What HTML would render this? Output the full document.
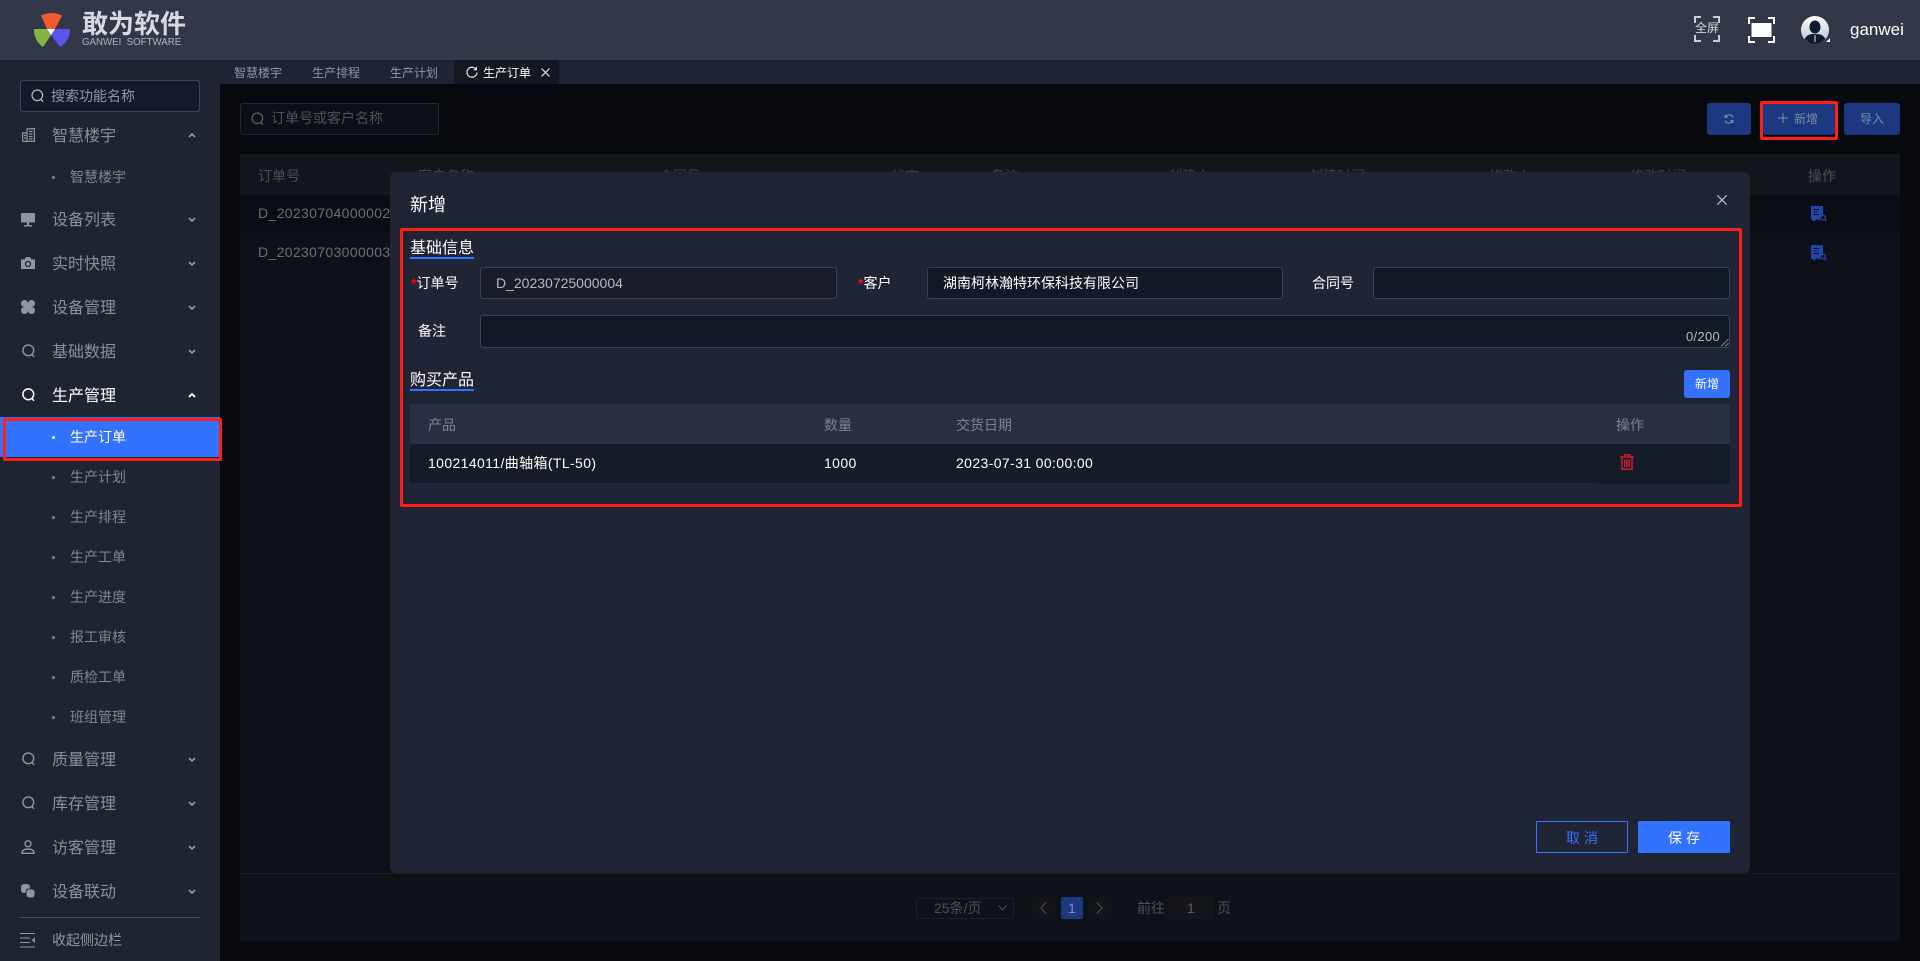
<!DOCTYPE html>
<html lang="zh"><head><meta charset="utf-8"><title>生产订单</title>
<style>
html,body{margin:0;padding:0;width:1920px;height:961px;overflow:hidden;background:#07090e}
body{position:relative;font-family:"Liberation Sans","Noto Sans CJK SC",sans-serif;font-size:14px;color:#fff}
.a,.t{position:absolute}
.t{line-height:20px;height:20px;white-space:nowrap}
.m{font-size:16px;color:#8a8f9c;left:52px}
.s{color:#7f8592;left:70px}
.dot{position:absolute;left:52px;width:3px;height:3px;border-radius:50%;background:#7f8592}
svg{position:absolute;display:block}
.ic{fill:none;stroke:#8f95a3;stroke-width:1.4}
.h{color:#3f424a}
.r{color:#6a6d74;letter-spacing:.35px}
.lb{color:#fff}
.inp{position:absolute;box-sizing:border-box;background:#131926;border:1px solid #3a4256;border-radius:3px}
.star{color:#ff0000;font-weight:700}
.th{color:#7d828e}
.v{letter-spacing:.38px}
</style></head><body>

<!-- header -->
<div class="a" style="left:0;top:0;width:1920px;height:60px;background:#323848"></div>
<svg style="left:30px;top:10px" width="44" height="40" viewBox="30 10 44 40">
<path d="M41 15.500Q51 10.500 62 15.500L55 29H47Z" fill="#f05a2c"/>
<path d="M34 29H47L51 35L43 47Q34 41 34 29Z" fill="#82b53f"/>
<path d="M70 29H55L51 35L60 47Q70 41 70 29Z" fill="#5a55ee"/>
<path d="M47 29H55L51 35Z" fill="#fff"/>
</svg>
<div class="t" style="left:82px;top:9px;height:30px;line-height:30px;font-size:26px;font-weight:700;color:#d6d9df">敢为软件</div>
<div class="t" style="left:82px;top:35px;height:16px;line-height:16px;font-size:9.700px;color:#aeb3bd">GANWEI&nbsp; SOFTWARE</div>

<svg style="left:1694px;top:16px" width="26" height="26" viewBox="0 0 26 26" fill="none" stroke="#c8cdd8" stroke-width="2"><path d="M1 7V1H7M19 1H25V7M25 19V25H19M7 25H1V19"/></svg>
<div class="t" style="left:1695px;top:18px;font-size:12px;color:#d4d7de">全屏</div>
<svg style="left:1748px;top:17px" width="27" height="26" viewBox="0 0 27 26" fill="none" stroke="#fff" stroke-width="2"><path d="M1 7V1H7M20 1H26V7M26 19V25H20M7 25H1V19"/><rect x="3.500" y="6" width="20" height="14" fill="#fff" stroke="none"/></svg>
<svg style="left:1801px;top:16px" width="29" height="29" viewBox="0 0 29 29"><defs><linearGradient id="g" x1="0" y1="0" x2="0" y2="1"><stop offset="0" stop-color="#fff"/><stop offset="1" stop-color="#b9c0d0"/></linearGradient></defs><circle cx="14" cy="14" r="14" fill="url(#g)"/><ellipse cx="14" cy="11" rx="5.500" ry="6.500" fill="#101a30"/><path d="M3.500 23Q6 18.500 11 18H17Q22 18.500 24.500 23Q20 28 14 28Q8 28 3.500 23Z" fill="#101a30"/><path d="M13.500 19H14.500V26H13.500Z" fill="#dfe3ea"/><path d="M25 26H29V22Z" fill="#fff"/></svg>
<div class="t" style="left:1850px;top:20px;font-size:17px;color:#fff">ganwei</div>

<!-- tab bar -->
<div class="a" style="left:220px;top:60px;width:1700px;height:24px;background:#1e2433"></div>
<div class="t" style="left:234px;top:63px;font-size:12px;color:#8f95a3">智慧楼宇</div>
<div class="t" style="left:312px;top:63px;font-size:12px;color:#8f95a3">生产排程</div>
<div class="t" style="left:390px;top:63px;font-size:12px;color:#8f95a3">生产计划</div>
<div class="a" style="left:454px;top:60px;width:105px;height:24px;background:#141823"></div>
<svg style="left:466px;top:66px" width="12" height="12" viewBox="0 0 12 12" fill="none" stroke="#e6e8ec" stroke-width="1.200"><path d="M10.200 3.500A5 5 0 1 0 11 6.500"/><path d="M10.500 0.800V3.800H7.500" stroke-width="1"/></svg>
<div class="t" style="left:483px;top:63px;font-size:12px;color:#fff">生产订单</div>
<svg style="left:541px;top:68px" width="9" height="9" viewBox="0 0 9 9" stroke="#e6e8ec" stroke-width="1.200"><path d="M.5 .5L8.500 8.500M8.500 .5L.5 8.500"/></svg>

<!-- sidebar -->
<div class="a" style="left:0;top:60px;width:220px;height:901px;background:#1f2433"></div>
<div class="a" style="left:20px;top:80px;width:180px;height:32px;box-sizing:border-box;background:#151a28;border:1px solid #3a4560;border-radius:3px"></div>
<svg style="left:31px;top:89px" width="13" height="14" viewBox="0 0 13 14" fill="none" stroke="#b6bac4" stroke-width="1.200"><circle cx="6.300" cy="6.300" r="5.300"/><path d="M10 10.500L12 12.800"/></svg>
<div class="t" style="left:51px;top:86px;color:#8f95a3">搜索功能名称</div>

<!-- menu icons -->
<svg style="left:22px;top:128px" width="13" height="14" viewBox="0 0 13 14" fill="none" stroke="#8f95a3" stroke-width="1.200"><path d="M.6 13.400V5H5M5 13.400V1L12.400 .6V13.400H.6"/><path d="M7 3.500H10.500M7 6H10.500M7 8.500H10.500M7 11H10.500M2 7.500H4M2 10H4"/></svg>
<svg style="left:21px;top:213px" width="14" height="14" viewBox="0 0 14 14" fill="#8f95a3"><rect width="14" height="9.500" rx="1"/><rect x="6" y="9.500" width="2" height="2.500"/><rect x="3" y="12" width="8" height="1.500"/></svg>
<svg style="left:21px;top:256px" width="14" height="14" viewBox="0 0 14 14"><path d="M0 3.500H3.500L5 1H9L10.500 3.500H14V13H0Z" fill="#8f95a3"/><circle cx="7" cy="8" r="2.500" fill="none" stroke="#1f2433" stroke-width="1.300"/></svg>
<svg style="left:21px;top:300px" width="14" height="14" viewBox="0 0 14 14" fill="#8f95a3"><circle cx="3.500" cy="3.500" r="3.500"/><circle cx="10.500" cy="3.500" r="3.500"/><circle cx="3.500" cy="10.500" r="3.500"/><circle cx="10.500" cy="10.500" r="3.500"/><rect x="3.500" y="3.500" width="7" height="7"/></svg>
<svg style="left:22px;top:344px" width="13" height="14" viewBox="0 0 13 14" class="ic"><circle cx="6.300" cy="6.300" r="5.400"/><path d="M10 10.500L12 12.800"/></svg>
<svg style="left:22px;top:388px" width="13" height="14" viewBox="0 0 13 14" fill="none" stroke="#fff" stroke-width="1.500"><circle cx="6.300" cy="6.300" r="5.400"/><path d="M10 10.500L12 12.800"/></svg>
<svg style="left:22px;top:752px" width="13" height="14" viewBox="0 0 13 14" class="ic"><circle cx="6.300" cy="6.300" r="5.400"/><path d="M10 10.500L12 12.800"/></svg>
<svg style="left:22px;top:796px" width="13" height="14" viewBox="0 0 13 14" class="ic"><circle cx="6.300" cy="6.300" r="5.400"/><path d="M10 10.500L12 12.800"/></svg>
<svg style="left:21px;top:840px" width="14" height="14" viewBox="0 0 14 14" class="ic"><circle cx="7" cy="3.800" r="3"/><path d="M1 13.300Q1 9 7 9Q13 9 13 13.300Z"/></svg>
<svg style="left:21px;top:884px" width="14" height="14" viewBox="0 0 14 14" fill="#8f95a3"><rect width="9" height="9" rx="3"/><rect x="5" y="5" width="9" height="9" rx="3" stroke="#1f2433" stroke-width="1"/></svg>
<svg style="left:20px;top:933px" width="15" height="15" viewBox="0 0 15 15" stroke="#8f95a3" fill="none"><path d="M0 .5H15M0 5H10M0 9.500H10M0 14H15"/><path d="M15 4.500L11.500 7.200L15 10Z" fill="#8f95a3" stroke="none"/></svg>

<!-- menu text -->
<div class="t m" style="top:127px">智慧楼宇</div>
<div class="t m" style="top:211px">设备列表</div>
<div class="t m" style="top:255px">实时快照</div>
<div class="t m" style="top:299px">设备管理</div>
<div class="t m" style="top:343px">基础数据</div>
<div class="t m" style="top:387px;color:#fff">生产管理</div>
<div class="t m" style="top:751px">质量管理</div>
<div class="t m" style="top:795px">库存管理</div>
<div class="t m" style="top:839px">访客管理</div>
<div class="t m" style="top:883px">设备联动</div>
<!-- chevrons -->
<svg style="left:0;top:0" width="220" height="961" fill="none" stroke="#a2a7b2" stroke-width="1.500">
<path d="M189 137L192 134L195 137"/>
<path d="M189 218L192 221L195 218M189 262L192 265L195 262M189 306L192 309L195 306M189 350L192 353L195 350M189 758L192 761L195 758M189 802L192 805L195 802M189 846L192 849L195 846M189 890L192 893L195 890"/>
<path d="M189 397L192 394L195 397" stroke="#fff" stroke-width="1.800"/>
</svg>

<div class="a" style="left:0;top:417px;width:220px;height:40px;background:#3371ff"></div>
<i class="dot" style="top:176px"></i><div class="t s" style="top:167px">智慧楼宇</div>
<i class="dot" style="top:436px;background:#fff"></i><div class="t s" style="top:427px;color:#fff">生产订单</div>
<i class="dot" style="top:476px"></i><div class="t s" style="top:467px">生产计划</div>
<i class="dot" style="top:516px"></i><div class="t s" style="top:507px">生产排程</div>
<i class="dot" style="top:556px"></i><div class="t s" style="top:547px">生产工单</div>
<i class="dot" style="top:596px"></i><div class="t s" style="top:587px">生产进度</div>
<i class="dot" style="top:636px"></i><div class="t s" style="top:627px">报工审核</div>
<i class="dot" style="top:676px"></i><div class="t s" style="top:667px">质检工单</div>
<i class="dot" style="top:716px"></i><div class="t s" style="top:707px">班组管理</div>
<div class="a" style="left:20px;top:917px;width:180px;height:1px;background:#4a5060"></div>
<div class="t" style="left:52px;top:930px;color:#8f95a3">收起侧边栏</div>
<div class="a" style="left:3px;top:418px;width:219px;height:43px;box-sizing:border-box;border:3px solid #ff1f14;border-radius:2px"></div>

<!-- content (dimmed) -->
<div class="a" style="left:240px;top:103px;width:199px;height:32px;box-sizing:border-box;border:1px solid #232734;border-radius:3px;background:#0c0f16"></div>
<svg style="left:251px;top:112px" width="13" height="14" viewBox="0 0 13 14" fill="none" stroke="#5c6068" stroke-width="1.200"><circle cx="6.300" cy="6.300" r="5.300"/><path d="M10 10.500L12 12.800"/></svg>
<div class="t" style="left:271px;top:108px;color:#4e5158">订单号或客户名称</div>

<div class="a" style="left:1707px;top:103px;width:44px;height:32px;border-radius:3px;background:#1b3880"></div>
<svg style="left:1724px;top:114px" width="10" height="10" viewBox="0 0 10 10" fill="none" stroke="#7f8ba6" stroke-width="1.200"><path d="M9 3.500A4.200 4.200 0 0 0 1.500 3M1 6.500A4.200 4.200 0 0 0 8.500 7"/><path d="M1.200 1V3.400H3.600M8.800 9V6.600H6.400"/></svg>
<div class="a" style="left:1763px;top:103px;width:72px;height:32px;border-radius:3px;background:#1b3880"></div>
<svg style="left:1778px;top:113px" width="10" height="10" viewBox="0 0 10 10" stroke="#7f8ba6" stroke-width="1"><path d="M5 0V10M0 5H10"/></svg>
<div class="t" style="left:1794px;top:109px;font-size:12px;color:#7f8ba6">新增</div>
<div class="a" style="left:1844px;top:103px;width:56px;height:32px;border-radius:3px;background:#1b3880"></div>
<div class="t" style="left:1860px;top:109px;font-size:12px;color:#7f8ba6">导入</div>
<div class="a" style="left:1760px;top:101px;width:78px;height:39px;box-sizing:border-box;border:3px solid #ff1f14;border-radius:2px"></div>

<div class="a" style="left:240px;top:154px;width:1660px;height:719px;background:#0e1119"></div>
<div class="a" style="left:240px;top:154px;width:1660px;height:41px;background:#13161d"></div>
<div class="a" style="left:240px;top:195px;width:1660px;height:38px;background:#0a0d13"></div>
<div class="a" style="left:240px;top:873px;width:1660px;height:68px;background:#10121a;border-top:1px solid #191c25;box-sizing:border-box"></div>

<div class="t h" style="left:258px;top:166px;color:#4b4e55">订单号</div>
<div class="t h" style="left:418px;top:166px">客户名称</div>
<div class="t h" style="left:659px;top:166px">合同号</div>
<div class="t h" style="left:891px;top:166px">状态</div>
<div class="t h" style="left:991px;top:166px">备注</div>
<div class="t h" style="left:1168px;top:166px">创建人</div>
<div class="t h" style="left:1309px;top:166px">创建时间</div>
<div class="t h" style="left:1489px;top:166px">修改人</div>
<div class="t h" style="left:1630px;top:166px">修改时间</div>
<div class="t h" style="left:1808px;top:166px;color:#4b4e55">操作</div>
<div class="t r" style="left:258px;top:203px">D_20230704000002</div>
<div class="t r" style="left:258px;top:242px">D_20230703000003</div>

<svg style="left:1811px;top:206px" width="16" height="16" viewBox="0 0 16 16"><path d="M0 0H12V10A4 4 0 0 0 9 15L6 13L3 15.500L0 13Z" fill="#1f47a8"/><path d="M2.500 3.500H8M2.500 6H6M2.500 8.500H8" stroke="#0a0d13" stroke-width="1"/><circle cx="12" cy="11.500" r="2.300" fill="none" stroke="#1f47a8" stroke-width="1.300"/><path d="M13.700 13.300L15.500 15.200" stroke="#1f47a8" stroke-width="1.300"/></svg>
<svg style="left:1811px;top:245px" width="16" height="16" viewBox="0 0 16 16"><path d="M0 0H12V10A4 4 0 0 0 9 15L6 13L3 15.500L0 13Z" fill="#1f47a8"/><path d="M2.500 3.500H8M2.500 6H6M2.500 8.500H8" stroke="#0e1119" stroke-width="1"/><circle cx="12" cy="11.500" r="2.300" fill="none" stroke="#1f47a8" stroke-width="1.300"/><path d="M13.700 13.300L15.500 15.200" stroke="#1f47a8" stroke-width="1.300"/></svg>

<!-- pagination -->
<div class="a" style="left:916px;top:898px;width:98px;height:21px;box-sizing:border-box;border:1px solid #1e2027;border-radius:2px"></div>
<div class="t" style="left:934px;top:898px;color:#4d4f56">25条/页</div>
<svg style="left:998px;top:905px" width="9" height="6" viewBox="0 0 9 6" fill="none" stroke="#4d4f56"><path d="M.5 .5L4.500 5L8.500 .5"/></svg>
<div class="a" style="left:1033px;top:897px;width:22px;height:22px;background:#14161c;border-radius:2px"></div>
<svg style="left:1040px;top:902px" width="7" height="12" viewBox="0 0 7 12" fill="none" stroke="#4d4f56"><path d="M6 .5L1 6L6 11.500"/></svg>
<div class="a" style="left:1061px;top:897px;width:22px;height:22px;background:#1b3880;border-radius:2px"></div>
<div class="t" style="left:1068px;top:898px;color:#8592ad">1</div>
<div class="a" style="left:1089px;top:897px;width:22px;height:22px;background:#14161c;border-radius:2px"></div>
<svg style="left:1096px;top:902px" width="7" height="12" viewBox="0 0 7 12" fill="none" stroke="#4d4f56"><path d="M1 .5L6 6L1 11.500"/></svg>
<div class="t" style="left:1137px;top:898px;color:#4d4f56">前往</div>
<div class="a" style="left:1168px;top:897px;width:46px;height:22px;background:#14161c;border-radius:2px"></div>
<div class="t" style="left:1187px;top:898px;color:#5c5e65">1</div>
<div class="t" style="left:1217px;top:898px;color:#4d4f56">页</div>

<!-- modal -->
<div class="a" style="left:390px;top:172px;width:1360px;height:701px;background:#1f2534;border-radius:6px"></div>
<div class="t" style="left:410px;top:195px;font-size:18px;color:#fff">新增</div>
<svg style="left:1717px;top:195px" width="10" height="10" viewBox="0 0 10 10" stroke="#cfd3da" stroke-width="1.100"><path d="M.3 .3L9.700 9.700M9.700 .3L.3 9.700"/></svg>

<div class="t" style="left:410px;top:239px;font-size:16px">基础信息</div>
<div class="a" style="left:410px;top:257px;width:64px;height:2px;background:#3371ff"></div>

<div class="t" style="left:411px;top:273px"><span class="star">*</span>订单号</div>
<div class="inp" style="left:480px;top:267px;width:357px;height:32px;background:#191d2a"></div>
<div class="t" style="left:496px;top:273px;color:#b5b9c2">D_20230725000004</div>
<div class="t" style="left:858px;top:273px"><span class="star">*</span>客户</div>
<div class="inp" style="left:927px;top:267px;width:356px;height:32px"></div>
<div class="t" style="left:943px;top:273px">湖南柯林瀚特环保科技有限公司</div>
<div class="t" style="left:1312px;top:273px">合同号</div>
<div class="inp" style="left:1373px;top:267px;width:357px;height:32px"></div>

<div class="t" style="left:418px;top:321px">备注</div>
<div class="inp" style="left:480px;top:315px;width:1250px;height:33px"></div>
<div class="t" style="left:1686px;top:327px;font-size:13px;letter-spacing:.3px;color:#b5b9c2">0/200</div>
<svg style="left:1721px;top:339px" width="8" height="8" viewBox="0 0 8 8" stroke="#9a9ea8" stroke-width=".8"><path d="M0 7.500L7.500 0M4 7.500L7.500 4"/></svg>

<div class="t" style="left:410px;top:371px;font-size:16px">购买产品</div>
<div class="a" style="left:410px;top:389px;width:64px;height:2px;background:#3371ff"></div>
<div class="a" style="left:1684px;top:370px;width:46px;height:28px;background:#3371ff;border-radius:3px"></div>
<div class="t" style="left:1695px;top:374px;font-size:12px">新增</div>

<div class="a" style="left:410px;top:404px;width:1320px;height:40px;background:#2a3040"></div>
<div class="a" style="left:410px;top:444px;width:1320px;height:39px;background:#151b27"></div>
<div class="a" style="left:1598px;top:444px;width:132px;height:40px;background:#151b27"></div>
<div class="t th" style="left:428px;top:415px">产品</div>
<div class="t th" style="left:824px;top:415px">数量</div>
<div class="t th" style="left:956px;top:415px">交货日期</div>
<div class="t th" style="left:1616px;top:415px">操作</div>
<div class="t v" style="left:428px;top:453px">100214011/曲轴箱(TL-50)</div>
<div class="t v" style="left:824px;top:453px">1000</div>
<div class="t v" style="left:956px;top:453px">2023-07-31 00:00:00</div>
<svg style="left:1620px;top:454px" width="14" height="16" viewBox="0 0 14 16" fill="none" stroke="#d01c2e" stroke-width="1.500"><path d="M0 3H14M4.500 3V.7H9.500V3M2 3V15.300H12V3"/><path d="M4.800 5.500V13M7 5.500V13M9.200 5.500V13"/></svg>

<div class="a" style="left:400px;top:228px;width:1342px;height:279px;box-sizing:border-box;border:3px solid #ff1f14;border-radius:2px"></div>

<div class="a" style="left:1536px;top:821px;width:92px;height:32px;box-sizing:border-box;border:1px solid #3371ff;border-radius:1px"></div>
<div class="t" style="left:1566px;top:828px;color:#3371ff;letter-spacing:4px">取消</div>
<div class="a" style="left:1638px;top:821px;width:92px;height:32px;background:#3371ff;border-radius:1px"></div>
<div class="t" style="left:1668px;top:828px;letter-spacing:4px">保存</div>

</body></html>
